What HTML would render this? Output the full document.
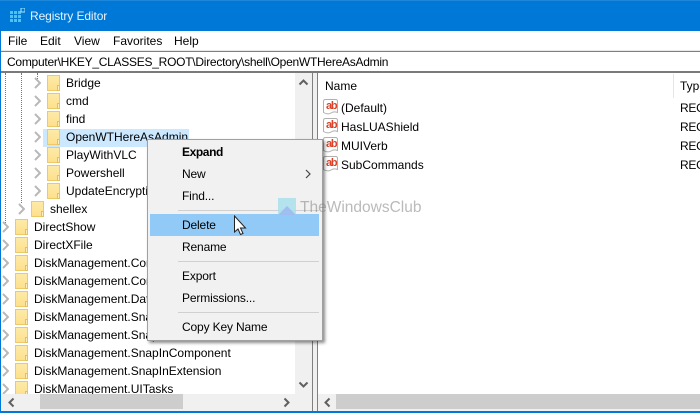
<!DOCTYPE html>
<html><head><meta charset="utf-8"><style>
html,body{margin:0;padding:0;background:#fff}
#a{position:relative;width:700px;height:413px;overflow:hidden;background:#fff;font:12px/16px "Liberation Sans",sans-serif;color:#000}
#a div,#a svg{position:absolute}
.t{white-space:nowrap;height:16px}
.f{width:13px;height:16px;border:1px solid #ecca6c;box-sizing:border-box;background:linear-gradient(#fdeaa8,#fde08c)}
.f::after{content:"";position:absolute;right:-1px;bottom:-1px;width:3px;height:6px;border:1px solid #e6c060;background:#fdf0bd;box-sizing:border-box}
.c{width:7px;height:12px}
.m{left:182px;white-space:nowrap;height:16px;letter-spacing:-.15px}
.s{left:178px;width:141px;height:1px;background:#d0d0d0}
.ab{left:323px;width:15px;height:16px}
.b{left:326px;color:#d9432a;font-weight:bold;font-size:11px;letter-spacing:-1.200px}
.n{left:341px;white-space:nowrap}
.r{left:680px;white-space:nowrap;letter-spacing:-.3px}
</style></head><body><div id="a">
<svg width="0" height="0" style="position:absolute"><defs>
<symbol id="ch" viewBox="0 0 7 12"><path d="M1 1l5 5-5 5" fill="none" stroke="#b8b8b8" stroke-width="2"/></symbol>
<symbol id="ab" viewBox="0 0 15 16"><path d="M.5 2.500Q.5.500 2.500.500H12.500Q14.500.500 14.500 2.500V13.500Q11 12 8 14T.5 13.500Z" fill="#fff" stroke="#b0b0b0"/></symbol>
</defs></svg>

<div style="left:0;top:0;width:700px;height:31px;background:#0078d7"></div>
<div style="left:0;top:0;width:700px;height:1px;background:#1e88dc"></div>
<svg style="left:9px;top:8px" width="16" height="16" viewBox="0 0 16 16"><g fill="#4fc3ee"><rect x="1" y="3" width="3" height="3"/><rect x="5" y="3" width="3" height="3"/><rect x="9" y="3" width="3" height="3"/><rect x="1" y="7" width="3" height="3"/><rect x="5" y="7" width="3" height="3"/><rect x="9" y="7" width="3" height="3"/><rect x="1" y="11" width="3" height="3"/><rect x="5" y="11" width="3" height="3"/><rect x="9" y="11" width="3" height="3"/></g><rect x="12" y="0" width="4" height="4" fill="none" stroke="#a8e4f8"/></svg>
<div class="t" style="left:30px;top:8px;color:#e8f3fc;font-size:12px;letter-spacing:-.1px">Registry Editor</div>

<div style="left:0;top:31px;width:1px;height:380px;background:#0078d7"></div>
<div style="left:0;top:411px;width:700px;height:2px;background:#0078d7"></div>

<div class="t" style="left:8px;top:33px">File</div>
<div class="t" style="left:40px;top:33px">Edit</div>
<div class="t" style="left:74px;top:33px">View</div>
<div class="t" style="left:113px;top:33px">Favorites</div>
<div class="t" style="left:174px;top:33px">Help</div>

<div style="left:1px;top:50px;width:699px;height:1px;background:#e8e8e8"></div>
<div style="left:1px;top:51px;width:699px;height:1px;background:#808080"></div>
<div style="left:1px;top:71px;width:699px;height:2px;background:#7a7a7a"></div>
<div class="t" style="left:7px;top:54px;letter-spacing:-.26px">Computer\HKEY_CLASSES_ROOT\Directory\shell\OpenWTHereAsAdmin</div>

<div style="left:21px;top:73px;height:130px;border-left:1px dotted #777"></div>
<div style="left:37px;top:73px;height:6px;border-left:1px dotted #777"></div>
<div style="left:5px;top:73px;height:150px;border-left:1px dotted #777"></div>

<div style="left:43px;top:129px;width:146px;height:18px;background:#cce8ff"></div>

<svg class="c" style="left:34px;top:77px"><use href="#ch"/></svg><div class="f" style="left:47px;top:75px"></div><div class="t" style="left:66px;top:75px">Bridge</div>
<svg class="c" style="left:34px;top:95px"><use href="#ch"/></svg><div class="f" style="left:47px;top:93px"></div><div class="t" style="left:66px;top:93px">cmd</div>
<svg class="c" style="left:34px;top:113px"><use href="#ch"/></svg><div class="f" style="left:47px;top:111px"></div><div class="t" style="left:66px;top:111px">find</div>
<svg class="c" style="left:34px;top:131px"><use href="#ch"/></svg><div class="f" style="left:47px;top:129px"></div><div class="t" style="left:66px;top:129px">OpenWTHereAsAdmin</div>
<svg class="c" style="left:34px;top:149px"><use href="#ch"/></svg><div class="f" style="left:47px;top:147px"></div><div class="t" style="left:66px;top:147px">PlayWithVLC</div>
<svg class="c" style="left:34px;top:167px"><use href="#ch"/></svg><div class="f" style="left:47px;top:165px"></div><div class="t" style="left:66px;top:165px">Powershell</div>
<svg class="c" style="left:34px;top:185px"><use href="#ch"/></svg><div class="f" style="left:47px;top:183px"></div><div class="t" style="left:66px;top:183px">UpdateEncryption</div>
<svg class="c" style="left:18px;top:203px"><use href="#ch"/></svg><div class="f" style="left:31px;top:201px"></div><div class="t" style="left:50px;top:201px">shellex</div>
<svg class="c" style="left:2px;top:221px"><use href="#ch"/></svg><div class="f" style="left:15px;top:219px"></div><div class="t" style="left:34px;top:219px">DirectShow</div>
<svg class="c" style="left:2px;top:239px"><use href="#ch"/></svg><div class="f" style="left:15px;top:237px"></div><div class="t" style="left:34px;top:237px">DirectXFile</div>
<svg class="c" style="left:2px;top:257px"><use href="#ch"/></svg><div class="f" style="left:15px;top:255px"></div><div class="t" style="left:34px;top:255px">DiskManagement.Connection</div>
<svg class="c" style="left:2px;top:275px"><use href="#ch"/></svg><div class="f" style="left:15px;top:273px"></div><div class="t" style="left:34px;top:273px">DiskManagement.Control</div>
<svg class="c" style="left:2px;top:293px"><use href="#ch"/></svg><div class="f" style="left:15px;top:291px"></div><div class="t" style="left:34px;top:291px">DiskManagement.DataObject</div>
<svg class="c" style="left:2px;top:311px"><use href="#ch"/></svg><div class="f" style="left:15px;top:309px"></div><div class="t" style="left:34px;top:309px">DiskManagement.SnapIn</div>
<svg class="c" style="left:2px;top:329px"><use href="#ch"/></svg><div class="f" style="left:15px;top:327px"></div><div class="t" style="left:34px;top:327px">DiskManagement.SnapInAbout</div>
<svg class="c" style="left:2px;top:347px"><use href="#ch"/></svg><div class="f" style="left:15px;top:345px"></div><div class="t" style="left:34px;top:345px">DiskManagement.SnapInComponent</div>
<svg class="c" style="left:2px;top:365px"><use href="#ch"/></svg><div class="f" style="left:15px;top:363px"></div><div class="t" style="left:34px;top:363px">DiskManagement.SnapInExtension</div>
<svg class="c" style="left:2px;top:383px"><use href="#ch"/></svg><div class="f" style="left:15px;top:381px"></div><div class="t" style="left:34px;top:381px">DiskManagement.UITasks</div>

<div style="left:295px;top:73px;width:17px;height:321px;background:#f0f0f0"></div>
<svg style="left:298px;top:78px" width="11" height="8"><path d="M1.500 6.500L5.500 2.500 9.500 6.500" fill="none" stroke="#606060" stroke-width="2"/></svg>
<svg style="left:298px;top:381px" width="11" height="8"><path d="M1.500 1.500L5.500 5.500 9.500 1.500" fill="none" stroke="#606060" stroke-width="2"/></svg>
<div style="left:1px;top:394px;width:311px;height:17px;background:#f0f0f0"></div>
<div style="left:40px;top:394px;width:143px;height:15px;background:#cdcdcd"></div>
<svg style="left:7px;top:397px" width="8" height="11"><path d="M6.500 1.500L2.500 5.500 6.500 9.500" fill="none" stroke="#606060" stroke-width="2"/></svg>
<svg style="left:283px;top:397px" width="8" height="11"><path d="M1.500 1.500L5.500 5.500 1.500 9.500" fill="none" stroke="#606060" stroke-width="2"/></svg>

<div style="left:312px;top:73px;width:1px;height:338px;background:#808080"></div>
<div style="left:313px;top:73px;width:4px;height:338px;background:#f0f0f0"></div>
<div style="left:317px;top:73px;width:1px;height:338px;background:#808080"></div>

<div style="left:318px;top:394px;width:382px;height:17px;background:#f0f0f0"></div>
<div style="left:336px;top:394px;width:364px;height:15px;background:#cdcdcd"></div>
<svg style="left:323px;top:397px" width="8" height="11"><path d="M6.500 1.500L2.500 5.500 6.500 9.500" fill="none" stroke="#606060" stroke-width="2"/></svg>

<div class="t" style="left:325px;top:78px">Name</div>
<div style="left:673px;top:74px;width:1px;height:24px;background:#e5e5e5"></div>
<div class="t" style="left:680px;top:78px">Type</div>

<svg class="ab" style="top:99px"><use href="#ab"/></svg><div class="t b" style="top:98px">ab</div><div class="t n" style="top:100px">(Default)</div><div class="t r" style="top:100px">REG_SZ</div>
<svg class="ab" style="top:118px"><use href="#ab"/></svg><div class="t b" style="top:117px">ab</div><div class="t n" style="top:119px">HasLUAShield</div><div class="t r" style="top:119px">REG_SZ</div>
<svg class="ab" style="top:137px"><use href="#ab"/></svg><div class="t b" style="top:136px">ab</div><div class="t n" style="top:138px">MUIVerb</div><div class="t r" style="top:138px">REG_SZ</div>
<svg class="ab" style="top:156px"><use href="#ab"/></svg><div class="t b" style="top:155px">ab</div><div class="t n" style="top:157px">SubCommands</div><div class="t r" style="top:157px">REG_SZ</div>

<div style="left:147px;top:139px;width:176px;height:202px;box-sizing:border-box;background:#f1f1f1;border:1px solid #a0a0a0;box-shadow:2px 2px 3px rgba(0,0,0,.45)"></div>
<div style="left:150px;top:214px;width:169px;height:22px;background:#91c9f7"></div>
<div class="m" style="top:144px;font-weight:bold;letter-spacing:-.4px">Expand</div>
<div class="m" style="top:166px">New</div>
<svg style="left:305px;top:169px" width="6" height="10"><path d="M1 1l4 4-4 4" fill="none" stroke="#444" stroke-width="1.200"/></svg>
<div class="m" style="top:188px">Find...</div>
<div class="s" style="top:210px"></div>
<div class="m" style="top:217px">Delete</div>
<div class="m" style="top:239px">Rename</div>
<div class="s" style="top:261px"></div>
<div class="m" style="top:268px">Export</div>
<div class="m" style="top:290px">Permissions...</div>
<div class="s" style="top:312px"></div>
<div class="m" style="top:319px">Copy Key Name</div>

<svg style="left:278px;top:198px" width="18" height="17" viewBox="0 0 18 17"><rect width="18" height="17" fill="#a5e0ee" opacity=".8"/><path d="M0 17L9 8 18 17Z" fill="#9bb8f0" opacity=".85"/></svg>
<div class="t" style="left:300px;top:198px;height:20px;font-size:15.500px;line-height:20px;color:rgba(130,130,130,.55)">TheWindowsClub</div>

<svg style="left:233px;top:215px" width="15" height="23" viewBox="0 0 15 23"><path d="M1.500 1V17L5 14 7.500 19.500 10 18.500 7.500 13H12.500Z" fill="#fff" stroke="#222" stroke-width="1"/></svg>
</div></body></html>
